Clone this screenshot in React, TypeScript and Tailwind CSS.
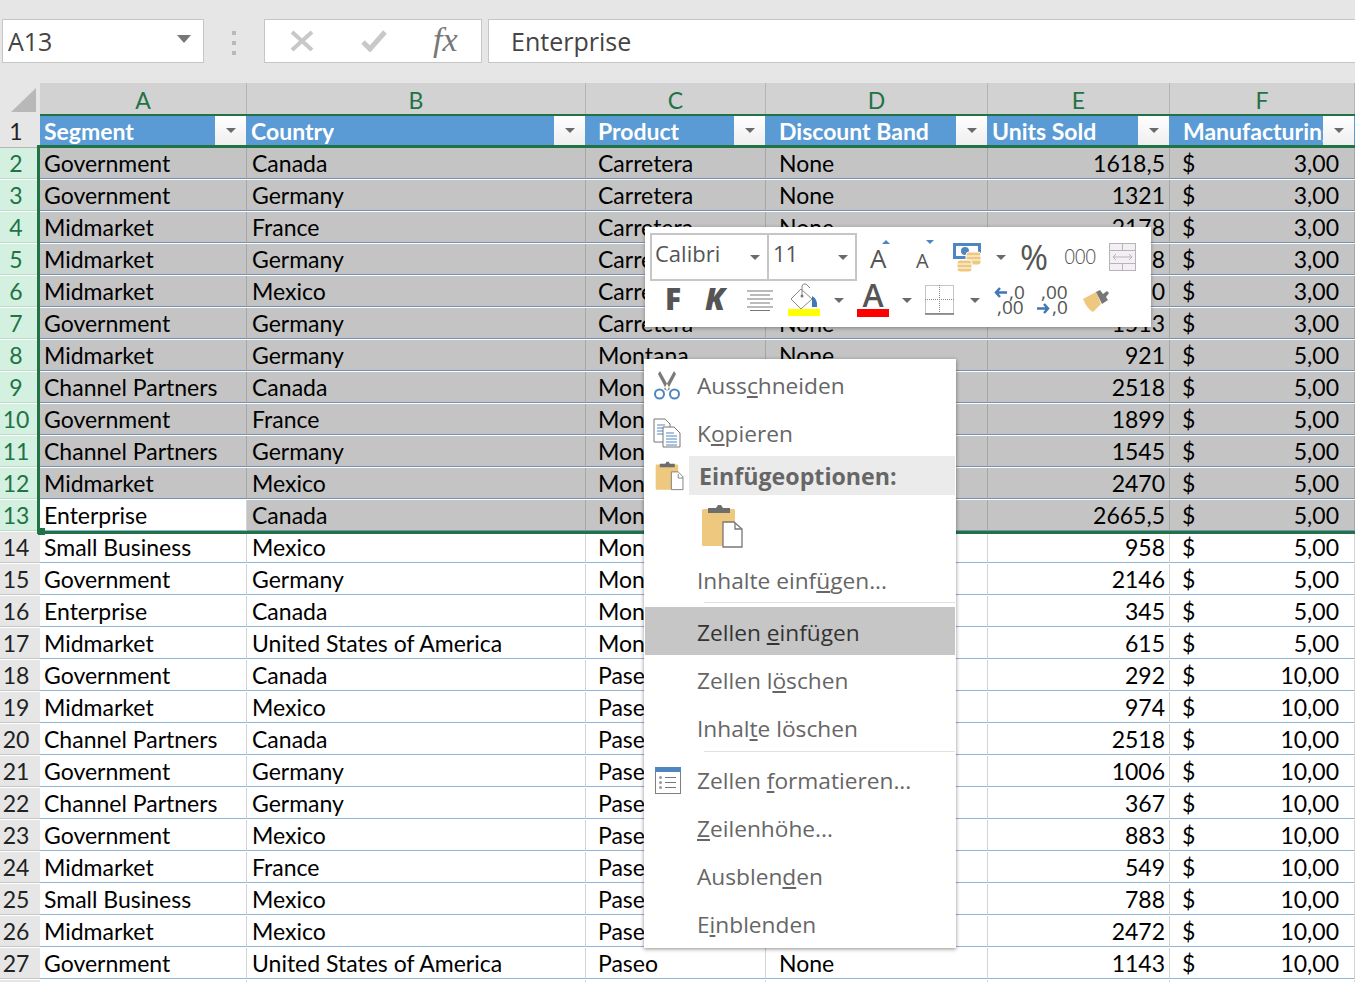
import type { ReactNode } from "react";

type Row = [string, string, string, string];

const rows: Row[] = [
  ["Government", "Canada", "1618,5", "3,00"],
  ["Government", "Germany", "1321", "3,00"],
  ["Midmarket", "France", "2178", "3,00"],
  ["Midmarket", "Germany", "888", "3,00"],
  ["Midmarket", "Mexico", "2470", "3,00"],
  ["Government", "Germany", "1513", "3,00"],
  ["Midmarket", "Germany", "921", "5,00"],
  ["Channel Partners", "Canada", "2518", "5,00"],
  ["Government", "France", "1899", "5,00"],
  ["Channel Partners", "Germany", "1545", "5,00"],
  ["Midmarket", "Mexico", "2470", "5,00"],
  ["Enterprise", "Canada", "2665,5", "5,00"],
  ["Small Business", "Mexico", "958", "5,00"],
  ["Government", "Germany", "2146", "5,00"],
  ["Enterprise", "Canada", "345", "5,00"],
  ["Midmarket", "United States of America", "615", "5,00"],
  ["Government", "Canada", "292", "10,00"],
  ["Midmarket", "Mexico", "974", "10,00"],
  ["Channel Partners", "Canada", "2518", "10,00"],
  ["Government", "Germany", "1006", "10,00"],
  ["Channel Partners", "Germany", "367", "10,00"],
  ["Government", "Mexico", "883", "10,00"],
  ["Midmarket", "France", "549", "10,00"],
  ["Small Business", "Mexico", "788", "10,00"],
  ["Midmarket", "Mexico", "2472", "10,00"],
  ["Government", "United States of America", "1143", "10,00"],
];

const gridCols = "grid grid-cols-[40px_207px_339px_180px_222px_182px_1fr]";

function Caret({ className = "" }: { className?: string }) {
  return (
    <svg width="10" height="5" viewBox="0 0 10 5" className={className}>
      <path d="M0 0h10L5 5z" fill="#6a6a6a" />
    </svg>
  );
}

function ColHead({ label }: { label: string }) {
  return (
    <div className="flex items-center justify-center border-r border-[#b5b5b5] bg-[#d2d2d2] pt-[3px] text-[23px] text-[#217346]">
      {label}
    </div>
  );
}

function TableHead({ label, pad }: { label: string; pad: string }) {
  return (
    <div className="relative overflow-hidden bg-[#5b9bd5]">
      <div className={`flex h-full items-center overflow-hidden pr-[32px] pb-[2px] text-[23px] leading-[28px] font-bold whitespace-nowrap text-white ${pad}`}>
        <span className="overflow-hidden">{label}</span>
      </div>
      <span className="absolute top-0 right-[1px] flex h-[29px] w-[31px] items-center justify-center bg-gradient-to-b from-white to-[#eeeeee]">
        <Caret />
      </span>
    </div>
  );
}

function Cell({ children, pad, on, className = "" }: { children?: ReactNode; pad: string; on: boolean; className?: string }) {
  return (
    <div
      className={`flex items-center overflow-hidden border-r border-b whitespace-nowrap ${pad} ${
        on ? "border-r-[#a6a6a6] border-b-[#7391b0] bg-[#c4c4c4]" : "border-r-[#d4d4d4] border-b-[#8fb4d9] bg-white"
      } ${className}`}
    >
      {children}
    </div>
  );
}

function Sheet() {
  return (
    <div className="relative font-['Lato',sans-serif] text-[23px] leading-[28px] text-black">
      <div className={`${gridCols} h-[30px]`}>
        <div className="relative bg-[#e6e6e6]">
          <svg width="40" height="30" viewBox="0 0 40 30" className="block">
            <path d="M11 29 36 5v24z" fill="#b8b8b8" />
          </svg>
        </div>
        {["A", "B", "C", "D", "E", "F", ""].map((c) => (
          <ColHead key={c} label={c} />
        ))}
      </div>
      <div className={`${gridCols} h-[35px] border-t-[3px] border-[#217346]`}>
        <div className="-mt-[3px] flex h-[35px] items-center justify-center border-t border-b border-[#b5b5b5] bg-[#e6e6e6] pt-[1px] pr-[8px] text-[#222]">1</div>
        <TableHead label="Segment" pad="pl-[4px]" />
        <TableHead label="Country" pad="pl-[4px]" />
        <TableHead label="Product" pad="pl-[12px]" />
        <TableHead label="Discount Band" pad="pl-[13px]" />
        <TableHead label="Units Sold" pad="pl-[4px]" />
        <TableHead label="Manufacturing" pad="pl-[13px]" />
        <div className="bg-white" />
      </div>
      {rows.map((r, i) => {
        const n = i + 2;
        const on = n <= 13;
        return (
          <div key={n} className={`${gridCols} h-[32px]`}>
            <div
              className={`flex items-center justify-center border-b pr-[8px] ${
                on ? "border-[#bcd8c8] bg-[#d3f0e0] text-[#217346]" : "border-[#c6c6c6] bg-[#e6e6e6] text-[#222]"
              }`}
            >
              {n}
            </div>
            <Cell pad="pl-[4px]" on={on && n !== 13}>{r[0]}</Cell>
            <Cell pad="pl-[5px]" on={on}>{r[1]}</Cell>
            <Cell pad="pl-[12px]" on={on}>{n < 8 ? "Carretera" : n < 18 ? "Montana" : "Paseo"}</Cell>
            <Cell pad="pl-[13px]" on={on}>None</Cell>
            <Cell pad="pr-[4px]" on={on} className="justify-end">{r[2]}</Cell>
            <Cell pad="pl-[12px] pr-[15px]" on={on} className="justify-between">
              <span>$</span>
              <span>{r[3]}</span>
            </Cell>
            <div className="bg-white" />
          </div>
        );
      })}
      {/* next row only peeks in at the bottom edge */}
      <div className={`${gridCols} h-[32px]`}>
        <div className="bg-[#e6e6e6]" />
        <Cell pad="" on={false} />
        <Cell pad="" on={false} />
        <Cell pad="" on={false} />
        <Cell pad="" on={false} />
        <Cell pad="" on={false} />
        <Cell pad="" on={false} />
        <div className="bg-white" />
      </div>
      {/* green selection frame around A2:F13 */}
      <div className="pointer-events-none absolute top-[62px] right-0 left-[37px] h-[389px] border-t-[3px] border-b-[3px] border-l-[3px] border-[#217346]" />
      <div className="pointer-events-none absolute top-[445px] left-[38px] h-[7px] w-[7px] bg-[#217346]" />
    </div>
  );
}

function FormulaBar() {
  return (
    <div className="flex h-[83px] items-start bg-[#e6e6e6] pt-[19px] pl-[2px] font-['Open_Sans',sans-serif] text-[25px] text-[#444]">
      <div className="flex h-[44px] w-[202px] items-center justify-between border border-[#c6c6c6] bg-white pt-[2px] pr-[12px] pl-[5px]">
        <span>A13</span>
        <svg width="14" height="8" viewBox="0 0 14 8" className="-mt-[6px]">
          <path d="M0 0h14L7 8z" fill="#777" />
        </svg>
      </div>
      <div className="mt-[12px] ml-[28px] flex w-[4px] flex-col gap-[6px]">
        <span className="h-[4px] bg-[#b9b9b9]" />
        <span className="h-[4px] bg-[#b9b9b9]" />
        <span className="h-[4px] bg-[#b9b9b9]" />
      </div>
      <div className="ml-[28px] flex h-[44px] w-[218px] items-center border border-[#c6c6c6] bg-white pl-[25px]">
        <svg width="24" height="24" viewBox="0 0 24 24">
          <path d="M2 3 22 21M22 3 2 21" stroke="#c8c8c8" strokeWidth="4" fill="none" />
        </svg>
        <svg width="26" height="22" viewBox="0 0 26 22" className="ml-[47px]">
          <path d="M2 12l7 7L24 2" stroke="#c8c8c8" strokeWidth="5" fill="none" />
        </svg>
        <span className="-mt-[3px] ml-[46px] font-['Liberation_Serif',serif] text-[34px] leading-none text-[#777] italic">fx</span>
      </div>
      <div className="ml-[6px] flex h-[44px] flex-1 items-center border-y border-l border-[#c6c6c6] bg-white pt-[2px] pl-[22px]">Enterprise</div>
    </div>
  );
}

function Clip({ w, doc }: { w: number; doc: string }) {
  return (
    <svg width={w} height={w} viewBox="0 0 44 44">
      <rect x="1" y="5" width="33" height="37" rx="1.5" fill="#edc87e" />
      <path d="M7 9V4h8l2-3h3l2 3h7v5z" fill="#6d6d6d" />
      <path d={doc} fill="#fff" stroke="#777" strokeWidth="1.3" />
      <path d="M34 19v6h7" fill="none" stroke="#777" strokeWidth="1.3" />
    </svg>
  );
}

function Item({ children, icon, active }: { children: ReactNode; icon?: ReactNode; active?: boolean }) {
  return (
    <div className={`flex h-[48px] items-center ${active ? "bg-[#c6c6c6] text-[#333]" : ""}`}>
      <div className="flex w-[52px] shrink-0 items-center justify-start pl-[9px]">{icon}</div>
      <div className={active ? "pt-[4px]" : "pt-[2px]"}>{children}</div>
    </div>
  );
}

function ContextMenu() {
  return (
    <div className="absolute top-[359px] left-[644px] z-20 h-[589px] w-[312px] bg-white pt-[2px] pr-[1px] pl-[1px] font-['Open_Sans',sans-serif] text-[22.7px] text-[#666] shadow-[0_1px_4px_rgba(0,0,0,0.45)]">
      <Item
        icon={
          <svg width="26" height="29" viewBox="0 0 26 29" className="shrink-0">
            <path d="M6 0l10 18-3 2L4 3zM20 0 10 18l3 2L22 3z" fill="#7a7a7a" />
            <circle cx="5.5" cy="23" r="4.5" fill="none" stroke="#4f86c0" strokeWidth="2" />
            <circle cx="20.5" cy="23" r="4.5" fill="none" stroke="#4f86c0" strokeWidth="2" />
          </svg>
        }
      >
        Auss<u>c</u>hneiden
      </Item>
      <Item
        icon={
          <svg width="28" height="30" viewBox="0 0 28 30" className="-ml-[1px] shrink-0">
            <path d="M1 1h11l5 5v18H1z" fill="#fff" stroke="#777" />
            <path d="M4 7h8M4 10h10M4 13h10M4 16h10" stroke="#4f86c0" />
            <path d="M10 9h11l6 6v14H10z" fill="#fff" stroke="#777" />
            <path d="M13 15h8M13 18h11M13 21h11M13 24h11M13 27h11" stroke="#4f86c0" />
          </svg>
        }
      >
        K<u>o</u>pieren
      </Item>
      <div className="mt-[-1px] flex h-[39px]">
        <div className="flex w-[44px] shrink-0 items-center justify-start pl-[10px]">
          <Clip w={30} doc="M24 16h10l7 7v19H24z" />
        </div>
        <div className="flex-1 bg-[#ebebeb] pt-[2px] pl-[10px] text-[23.2px] leading-[37px] font-bold">Einfügeoptionen:</div>
      </div>
      <div className="flex h-[61px] items-center pl-[56px]">
        <Clip w={44} doc="M22 18h11l8 7v18H22z" />
      </div>
      <Item>Inhalte einf<u>ü</u>gen...</Item>
      <div className="mt-[-2px] ml-[59px] h-[1px] bg-[#e1e1e1]" />
      <div className="mt-[4px] mb-[1px]">
        <Item active>Zellen <u>e</u>infügen</Item>
      </div>
      <Item>Zellen l<u>ö</u>schen</Item>
      <Item>Inhal<u>t</u>e löschen</Item>
      <div className="mt-[-1px] ml-[59px] h-[1px] bg-[#e1e1e1]" />
      <div className="mt-[4px]">
        <Item
          icon={
            <svg width="26" height="27" viewBox="0 0 26 27" className="ml-[1px] shrink-0">
              <rect x="0.5" y="0.5" width="25" height="26" fill="#fff" stroke="#808080" />
              <rect x="0" y="0" width="26" height="5" fill="#4f86c0" />
              <path d="M10 10.5h11M10 15.5h11M10 20.5h11" stroke="#777" />
              <circle cx="5.5" cy="10.5" r="1.5" fill="#999" />
              <circle cx="5.5" cy="15.5" r="1.5" fill="#999" />
              <circle cx="5.5" cy="20.5" r="1.5" fill="#999" />
            </svg>
          }
        >
          Zellen <u>f</u>ormatieren...
        </Item>
      </div>
      <Item><u>Z</u>eilenhöhe...</Item>
      <Item>Ausblen<u>d</u>en</Item>
      <Item>E<u>i</u>nblenden</Item>
    </div>
  );
}

function ToolCaret({ ml }: { ml: string }) {
  return <Caret className={`shrink-0 ${ml}`} />;
}

function MiniToolbar() {
  return (
    <div className="absolute top-[227px] left-[645px] z-10 h-[100px] w-[506px] bg-white pt-[6px] pl-[5px] font-['Open_Sans',sans-serif] text-[#555] shadow-[0_1px_4px_rgba(0,0,0,0.35)]">
      <div className="flex h-[48px] items-center">
        <div className="flex h-[48px] w-[119px] items-center justify-between border-2 border-[#c6c6c6] pr-[7px] pl-[3px] text-[22px]">
          <span className="-mt-[8px]">Calibri</span>
          <Caret />
        </div>
        <div className="-ml-[1px] flex h-[48px] w-[89px] items-center justify-between border-2 border-l-0 border-[#c6c6c6] pr-[7px] pl-[5px] text-[22px]">
          <span className="-mt-[8px]">11</span>
          <Caret />
        </div>
        <div className="relative ml-[13px] h-[40px] w-[19px] shrink-0">
          <span className="absolute top-[8px] left-0 text-[26px] leading-[26px]">A</span>
          <svg width="8" height="4" viewBox="0 0 8 4" className="absolute top-[3px] left-[12px]">
            <path d="M0 4h8L4 0z" fill="#4f86c0" />
          </svg>
        </div>
        <div className="relative ml-[27px] h-[40px] w-[14px] shrink-0">
          <span className="absolute top-[13px] left-0 text-[20px] leading-[22px]">A</span>
          <svg width="8" height="4" viewBox="0 0 8 4" className="absolute top-[3px] left-[10px]">
            <path d="M0 0h8L4 4z" fill="#4f86c0" />
          </svg>
        </div>
        <svg width="28" height="29" viewBox="0 0 28 29" className="ml-[23px] shrink-0">
          <rect x="1.5" y="1.5" width="25" height="13" fill="none" stroke="#4f86c0" strokeWidth="3" />
          <circle cx="12" cy="8" r="4" fill="#4f86c0" />
          <rect x="13" y="9" width="15" height="13" rx="3" fill="#edc87e" stroke="#fff" />
          <path d="M13 13h15M13 17h15" stroke="#fff" />
          <rect x="4" y="17" width="15" height="12" rx="3" fill="#edc87e" stroke="#fff" />
          <path d="M4 21h15M4 25h15" stroke="#fff" />
        </svg>
        <ToolCaret ml="ml-[15px]" />
        <span className="ml-[14px] text-[34px] leading-none">%</span>
        <span className="ml-[16px] text-[20px] leading-none font-light tracking-[-1px]">000</span>
        <svg width="27" height="28" viewBox="0 0 27 28" className="ml-[14px] shrink-0">
          <rect x="0.5" y="0.5" width="26" height="27" fill="#f3eff5" stroke="#b5b5b5" />
          <path d="M0 7.5h27M0 20.5h27M13.5 0v7M13.5 21v7" stroke="#b5b5b5" />
          <path d="M4 14h19M7 11l-3 3 3 3M20 11l3 3-3 3" fill="none" stroke="#b5b5b5" />
        </svg>
      </div>
      <div className="mt-[1px] flex h-[36px] items-center">
        <span className="-mt-[2px] ml-[15px] w-[15px] text-[30px] leading-none font-extrabold">F</span>
        <span className="-mt-[2px] ml-[25px] w-[22px] text-[30px] leading-none font-extrabold italic">K</span>
        <svg width="26" height="21" viewBox="0 0 26 21" className="ml-[20px] shrink-0">
          <path d="M0 1h26M3 5h20M0 9h26M3 13h20M0 17h26M3 20.5h20" stroke="#777" strokeWidth="1" />
        </svg>
        <svg width="32" height="34" viewBox="0 0 32 34" className="ml-[15px] shrink-0">
          <path d="M13 6 3 16l10 10 11-10z" fill="#fff" stroke="#888" />
          <path d="M14 13V3q1-3 4-2l4 4" fill="none" stroke="#888" />
          <circle cx="14" cy="13" r="1.5" fill="#777" />
          <path d="M24 13q6 3 5 11h-5z" fill="#3f78b5" />
          <rect x="0" y="26" width="32" height="7" fill="#ffff00" />
        </svg>
        <ToolCaret ml="ml-[14px]" />
        <div className="ml-[13px] flex w-[32px] shrink-0 flex-col items-center">
          <span className="h-[24px] text-[32px] leading-[24px] font-semibold">A</span>
          <span className="mt-[2px] h-[8px] w-[32px] bg-[#ff0000]" />
        </div>
        <ToolCaret ml="ml-[13px]" />
        <svg width="29" height="30" viewBox="0 0 29 30" className="ml-[13px] shrink-0">
          <rect x="0.5" y="0.5" width="28" height="28" fill="none" stroke="#8c8c8c" strokeDasharray="1 1" />
          <path d="M14.5 0v29M0 14.5h29" stroke="#8c8c8c" strokeDasharray="1 1" />
          <path d="M0 29h29" stroke="#777" strokeWidth="1.5" />
        </svg>
        <ToolCaret ml="ml-[16px]" />
        <div className="relative ml-[14px] h-[30px] w-[30px] shrink-0 text-[19px] leading-[15px]">
          <svg width="13" height="11" viewBox="0 0 13 11" className="absolute top-[2px] left-0">
            <path d="M13 5.5H3M6 1 2 5.5 6 10" fill="none" stroke="#3f78b5" strokeWidth="2.5" />
          </svg>
          <span className="absolute top-0 left-[15px]">,0</span>
          <span className="absolute top-[15px] left-[3px]">,00</span>
        </div>
        <div className="relative ml-[13px] h-[30px] w-[30px] shrink-0 text-[19px] leading-[15px]">
          <span className="absolute top-0 left-[4px]">,00</span>
          <svg width="13" height="11" viewBox="0 0 13 11" className="absolute top-[18px] left-0">
            <path d="M0 5.5h10M7 1l4 4.5L7 10" fill="none" stroke="#3f78b5" strokeWidth="2.5" />
          </svg>
          <span className="absolute top-[15px] left-[15px]">,0</span>
        </div>
        <svg width="26" height="23" viewBox="0 0 26 23" className="ml-[16px] shrink-0">
          <path d="M0 10 13 3l5 12-8 8q-6-3-10-13z" fill="#edc87e" />
          <path d="m13 3 4-2 3 4 4-3 2 2-3 4 2 3-6 4z" fill="#777" />
        </svg>
      </div>
    </div>
  );
}

export default function App() {
  return (
    <div className="relative h-[982px] w-full overflow-hidden bg-white">
      <FormulaBar />
      <Sheet />
      <MiniToolbar />
      <ContextMenu />
    </div>
  );
}
